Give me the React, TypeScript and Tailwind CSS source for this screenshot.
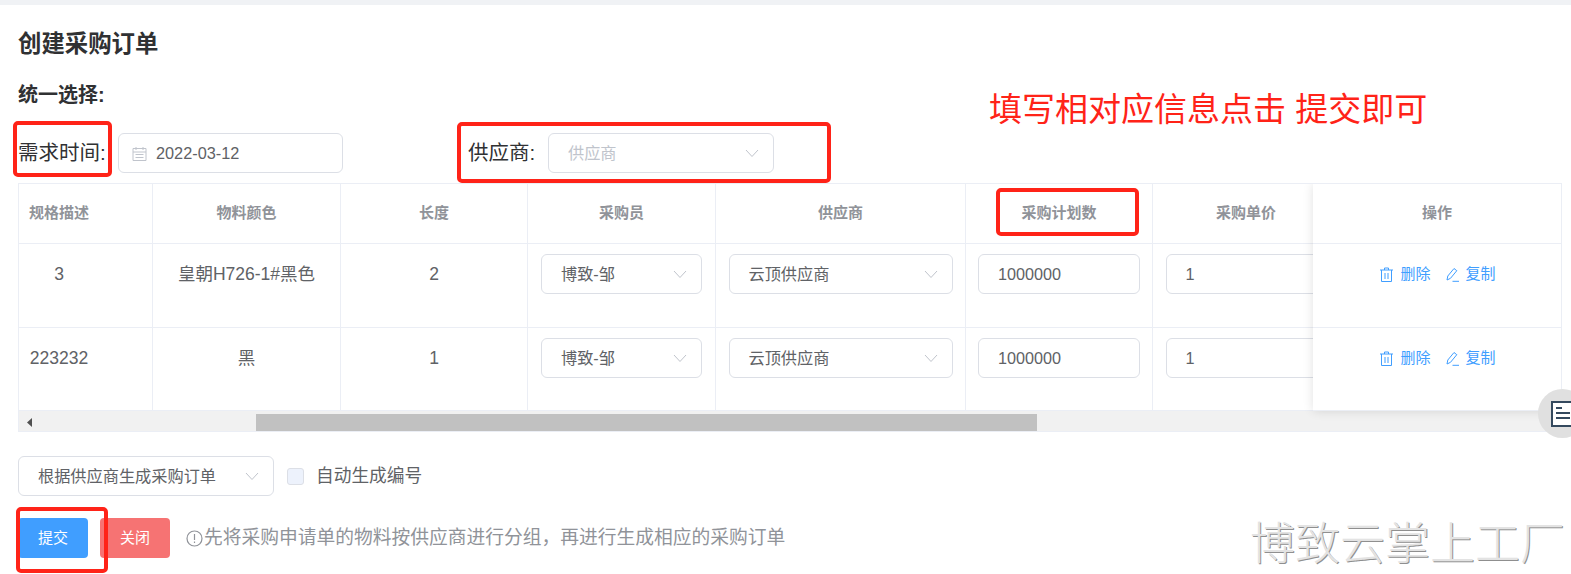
import React from "react";

const Chevron = ({ className = "" }: { className?: string }) => (
  <svg width="14" height="9" viewBox="0 0 14 9" fill="none" className={className}>
    <path d="M1 1l6 6.5L13 1" stroke="#c0c4cc" strokeWidth="1" />
  </svg>
);

const Field = ({ text, w, placeholder }: { text: string; w: string; placeholder?: boolean }) => (
  <div className={`${w} h-10 shrink-0 flex items-center justify-between pl-[19px] pr-[14px] border border-[#dcdfe6] rounded-md bg-white`}>
    <span className={`text-[16.2px] whitespace-nowrap ${placeholder ? "text-[#c0c4cc]" : "text-[#606266]"}`}>{text}</span>
    <Chevron />
  </div>
);

const TextBox = ({ text, w }: { text: string; w: string }) => (
  <div className={`${w} h-10 flex items-center pl-[19px] border border-[#dcdfe6] rounded-md bg-white text-[16.2px] text-[#606266]`}>{text}</div>
);

const TrashIcon = () => (
  <svg width="13" height="15" viewBox="0 0 13 15" fill="none" stroke="#409eff" strokeWidth="1">
    <path d="M0 3h13M1.5 3v11.5h10V3M4.5 3V1h4v2M5 6v6M8 6v6" />
  </svg>
);

const EditIcon = () => (
  <svg width="13" height="15" viewBox="0 0 13 15" fill="none" stroke="#409eff" strokeWidth="1">
    <path d="M1 13l.8-4L8 1.5l2.8 2.2L4.5 11.3 1 13zM6.5 14.3H13" />
  </svg>
);

const Th = ({ children, className = "" }: { children: React.ReactNode; className?: string }) => (
  <th className={`h-[60px] border-r border-b border-[#ebeef5] p-0 text-[15px] font-bold text-[#909399] text-center ${className}`}>{children}</th>
);

const Td = ({ children, h, first }: { children: React.ReactNode; h: string; first?: boolean }) => (
  <td className={`${h} border-r border-b border-[#ebeef5] p-0 pt-[10px] align-top text-[16px] text-[#606266] ${first ? "" : "text-center"}`}>
    {children}
  </td>
);

const rows = [
  { spec: "3", color: "皇朝H726-1#黑色", len: "2", h: "h-[84px]" },
  { spec: "223232", color: "黑", len: "1", h: "h-[83px]" },
];

const Actions = ({ h }: { h: string }) => (
  <div className={`${h} border-b border-[#ebeef5] pt-[20px] pl-[2px] flex justify-center gap-[15px] text-[15px] leading-[20px] text-[#409eff]`}>
    <span className="flex items-center gap-[7px] h-5"><TrashIcon />删除</span>
    <span className="flex items-center gap-[7px] h-5"><EditIcon />复制</span>
  </div>
);

const Box = ({ className }: { className: string }) => (
  <div className={`absolute border-[4px] border-[#ff2318] rounded-[5px] ${className}`} />
);

export default function App() {
  return (
    <div className="relative w-full h-[574px] overflow-hidden bg-white font-['Liberation_Sans','Noto_Sans_CJK_SC',sans-serif]">
      <div className="h-[5px] bg-[#f0f2f5]" />
      <div className="pl-[18px] pr-[9px]">
        <h1 className="h-[80px] flex items-center text-[23.4px] font-bold text-[#303133]">创建采购订单</h1>
        <div className="h-[20px] flex items-center text-[20px] font-bold text-[#303133]">统一选择:</div>

        <div className="mt-[28px] h-10 flex items-center">
          <span className="w-[100px] text-[20.5px] text-[#303133]">需求时间:</span>
          <div className="w-[225px] h-10 flex items-center pl-[13px] border border-[#dcdfe6] rounded-md">
            <svg width="15" height="15" viewBox="0 0 15 15" fill="none" stroke="#c0c4cc" strokeWidth="1">
              <path d="M1 2.5h13v12H1zM1 6h13M4 1v3M11 1v3M3.5 8.5h8M3.5 11.5h8" />
            </svg>
            <span className="ml-[9px] text-[16.3px] text-[#606266]">2022-03-12</span>
          </div>
          <span className="ml-[125px] w-[80px] text-[20.5px] text-[#303133]">供应商:</span>
          <Field text="供应商" w="w-[226px]" placeholder />
        </div>

        <div className="relative mt-[10px] border-t border-l border-[#ebeef5] overflow-hidden">
          <table className="table-fixed border-separate border-spacing-0 w-[1700px]">
            <colgroup>
              <col className="w-[134px]" />
              <col className="w-[188px]" />
              <col className="w-[187px]" />
              <col className="w-[188px]" />
              <col className="w-[250px]" />
              <col className="w-[187px]" />
              <col className="w-[187px]" />
              <col />
            </colgroup>
            <thead>
              <tr>
                <Th><div className="ml-[9px] w-[62px]">规格描述</div></Th>
                <Th>物料颜色</Th>
                <Th>长度</Th>
                <Th>采购员</Th>
                <Th>供应商</Th>
                <Th>采购计划数</Th>
                <Th>采购单价</Th>
                <Th>操作</Th>
              </tr>
            </thead>
            <tbody>
              {rows.map((r) => (
                <tr key={r.spec}>
                  <Td h={r.h} first><div className="ml-[9px] w-[62px] h-10 flex items-center justify-center text-[17.5px]">{r.spec}</div></Td>
                  <Td h={r.h}><div className="h-10 flex items-center justify-center text-[17.5px]">{r.color}</div></Td>
                  <Td h={r.h}><div className="h-10 flex items-center justify-center text-[17.5px]">{r.len}</div></Td>
                  <Td h={r.h}><div className="flex justify-center"><Field text="博致-邹" w="w-[161px]" /></div></Td>
                  <Td h={r.h}><div className="flex justify-center"><Field text="云顶供应商" w="w-[224px]" /></div></Td>
                  <Td h={r.h}><div className="flex justify-center text-left"><TextBox text="1000000" w="w-[162px]" /></div></Td>
                  <Td h={r.h}><div className="flex justify-center text-left"><TextBox text="1" w="w-[161px]" /></div></Td>
                  <Td h={r.h}> </Td>
                </tr>
              ))}
            </tbody>
          </table>

          <div className="absolute top-0 right-0 w-[249px] h-[227px] bg-white border-r border-[#ebeef5] shadow-[0_0_10px_rgba(0,0,0,0.12)]">
            <div className="h-[60px] border-b border-[#ebeef5] flex items-center justify-center text-[15px] font-bold text-[#909399]">操作</div>
            <Actions h="h-[84px]" />
            <Actions h="h-[83px]" />
          </div>

          <div className="h-[21px] bg-[#f1f1f1] border-b border-[#ebeef5] flex items-start pt-[3px]">
            <svg width="6" height="9" viewBox="0 0 6 9" className="ml-[8px] mt-[4px] shrink-0">
              <path d="M5 0v9L0 4.5z" fill="#505050" />
            </svg>
            <div className="ml-[223px] w-[781px] h-[17px] bg-[#c1c1c1]" />
          </div>
        </div>

        <div className="mt-[24px] h-10 flex items-center">
          <Field text="根据供应商生成采购订单" w="w-[256px]" />
          <div className="ml-[13px] w-[17px] h-[17px] rounded-[3px] border border-[#dcdfe6] bg-[#edf2fc]" />
          <span className="ml-[12px] text-[17.7px] text-[#606266]">自动生成编号</span>
        </div>

        <div className="mt-[22px] h-10 flex items-center">
          <button className="w-[70px] h-10 rounded-[4px] bg-[#409eff] text-white text-[15px]">提交</button>
          <button className="ml-[12px] w-[70px] h-10 rounded-[4px] bg-[#f67373] text-white text-[15px]">关闭</button>
          <div className="ml-[16px] flex items-center text-[18.75px] text-[#909399] whitespace-nowrap">
            <svg width="17" height="17" viewBox="0 0 17 17" fill="none" stroke="#909399" strokeWidth="1.2" className="mr-[1px]">
              <circle cx="8.5" cy="8.5" r="7.5" />
              <path d="M8.5 4v6M8.5 11.5v1.5" />
            </svg>
            先将采购申请单的物料按供应商进行分组，再进行生成相应的采购订单
          </div>
        </div>
      </div>

      <div className="absolute left-[989px] top-[88px] text-[33px] leading-[44px] text-[#ff2318] whitespace-nowrap">填写相对应信息点击 提交即可</div>
      <div className="absolute left-[1250px] top-[520px] text-[45px] leading-[50px] font-light text-[#e3e3e3] whitespace-nowrap [text-shadow:1px_1px_0_#8f8f8f]">博致云掌上工厂</div>

      <Box className="left-[13px] top-[121px] w-[99px] h-[56px]" />
      <Box className="left-[457px] top-[122px] w-[374px] h-[61px]" />
      <Box className="left-[996px] top-[188px] w-[143px] h-[48px]" />
      <Box className="left-[16px] top-[507px] w-[92px] h-[66px]" />

      <div className="absolute left-[1538px] top-[389px] w-[49px] h-[49px] rounded-full bg-[#e0e0e0] flex items-center pl-[13px]">
        <div className="w-[26px] h-[26px] shrink-0 border-2 border-[#34495e] bg-white pl-[3px] pt-[4px] flex flex-col gap-[3px]">
          <div className="w-[6px] h-[2px] bg-[#34495e]" />
          <div className="w-[14px] h-[2px] bg-[#34495e]" />
          <div className="w-[14px] h-[2px] bg-[#34495e]" />
        </div>
      </div>
    </div>
  );
}
